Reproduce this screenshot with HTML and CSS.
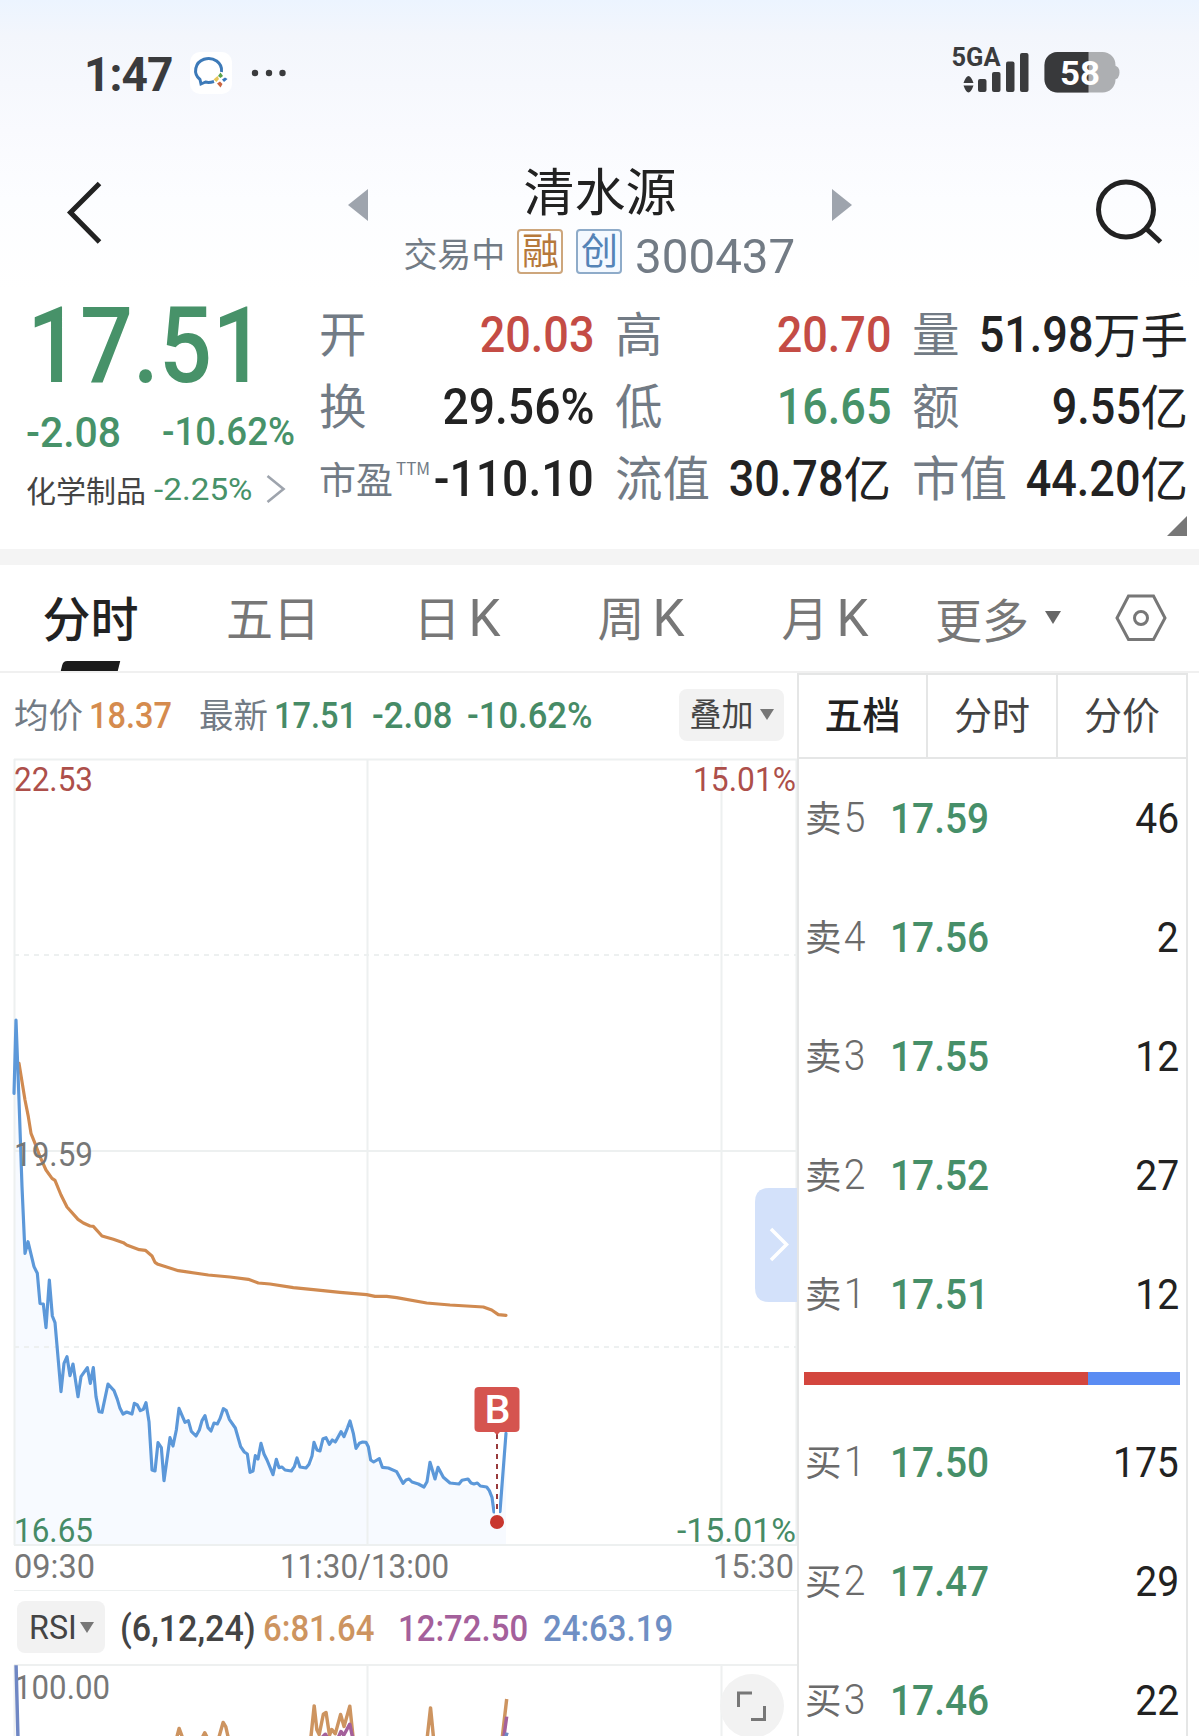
FILE: index.html
```html
<!DOCTYPE html>
<html lang="zh-CN">
<head>
<meta charset="utf-8">
<title>清水源 300437</title>
<link rel="stylesheet" href="styles.css">
</head>
<body>
<header class="top">
  <div class="status">
    <span class="clock">1:47</span>
    <svg class="app" width="42" height="42" viewBox="0 0 42 42"><rect width="42" height="42" rx="10" fill="#fff"/><path d="M31.500 20A13 12 0 1 0 10 27.500L11 32 15.500 30Q19 31 24 29.500" fill="none" stroke="#3d7ab8" stroke-width="3"/><path d="M30.500 20.500L33 24 30.500 26 28 24Z" fill="#5ba24a"/><path d="M37.500 27L34 30 32 27.500 35 25.500Z" fill="#3677bd"/><path d="M30.500 35.500L27 31.500 30 29.500 32.500 32Z" fill="#cb6540"/><path d="M23.500 27.500L27.500 24 29 27 26.500 30Z" fill="#e8c659"/></svg>
    <svg class="dots" width="36" height="8" viewBox="0 0 36 8" fill="#3a3b3d"><circle cx="4" cy="4" r="3.200"/><circle cx="18" cy="4" r="3.200"/><circle cx="31.500" cy="4" r="3.200"/></svg>
    <svg class="signal" width="78" height="58" viewBox="951 40 78 58" fill="#3a3b3d"><text x="951.500" y="66" class="net" textLength="49" lengthAdjust="spacingAndGlyphs">5GA</text><path d="M963.500 83Q966 76 968.500 76T973.500 83ZM963.500 85.500Q966 92.500 968.500 92.500T973.500 85.500Z"/><rect x="978" y="79" width="8.500" height="13" rx="2"/><rect x="992" y="72" width="8.500" height="20" rx="2"/><rect x="1006" y="61.500" width="8.500" height="30.500" rx="2"/><rect x="1020" y="53" width="8.500" height="39" rx="2"/></svg>
    <svg class="battery" width="76" height="42" viewBox="1044 51 76 42"><defs><clipPath id="cell"><rect x="1044.500" y="52" width="71" height="40.500" rx="13"/></clipPath></defs><path d="M1114 65.500Q1119.500 66 1119.500 72.500T1114 79.500Z" fill="#adafb2"/><g clip-path="url(#cell)"><rect x="1044" y="52" width="72" height="41" fill="#adafb2"/><rect x="1044" y="52" width="44.500" height="41" fill="#38393b"/></g><text x="1060" y="84.500" class="pct" textLength="40" lengthAdjust="spacingAndGlyphs">58</text></svg>
  </div>
  <nav class="nav">
    <svg class="back" width="36" height="66" viewBox="66 180 36 66"><path d="M99.500 183.500L70.500 212.500 99.500 242" fill="none" stroke="#222" stroke-width="5"/></svg>
    <svg class="prev" width="20" height="32"><path d="M0 16L20 0V32Z" fill="#9ea4ad"/></svg>
    <div class="name">
      <h1>清水源</h1>
      <div class="sub"><span class="state">交易中</span><span class="tag rong">融</span><span class="tag chuang">创</span><span class="code">300437</span></div>
    </div>
    <svg class="next" width="20" height="32"><path d="M20 16L0 0V32Z" fill="#9ea4ad"/></svg>
    <svg class="search" width="68" height="66" viewBox="1095 178 68 66" fill="none" stroke="#222" stroke-width="5"><circle cx="1126" cy="209.500" r="27.500"/><path d="M1145.500 228L1160.500 242"/></svg>
  </nav>
  <section class="quote">
    <div class="last">
      <div class="price">17.51</div>
      <div class="change"><span class="diff">-2.08</span><span class="rate">-10.62%</span></div>
      <div class="sector"><span>化学制品</span><span class="srate">-2.25%</span><svg width="20" height="28"><path d="M1.500 1L17.500 14 1.500 27" fill="none" stroke="#9ea4ad" stroke-width="2.600"/></svg></div>
    </div>
    <div class="stats">
      <div class="cell"><label>开</label><b class="up">20.03</b></div>
      <div class="cell"><label>高</label><b class="up">20.70</b></div>
      <div class="cell"><label>量</label><b>51.98</b><i>万手</i></div>
      <div class="cell"><label>换</label><b class="pc">29.56%</b></div>
      <div class="cell"><label>低</label><b class="down">16.65</b></div>
      <div class="cell"><label>额</label><b>9.55</b><i>亿</i></div>
      <div class="cell pe"><label>市盈<sup>TTM</sup></label><b class="pc">-110.10</b></div>
      <div class="cell"><label>流值</label><b>30.78</b><i>亿</i></div>
      <div class="cell"><label>市值</label><b>44.20</b><i>亿</i></div>
    </div>
    <svg class="corner" width="20" height="20"><path d="M20 0V20H0Z" fill="#777"/></svg>
  </section>
</header>
<nav class="tabs">
  <span class="on">分时</span><span>五日</span><span>日<em>K</em></span><span>周<em>K</em></span><span>月<em>K</em></span><span class="more">更多<svg width="16" height="13"><path d="M0 0H16L8 13Z" fill="#666"/></svg></span>
  <svg class="hex" width="52" height="48" viewBox="0 0 52 48" fill="none" stroke="#777" stroke-width="3"><path d="M13.500 2H38.500L50 24 38.500 45.500H13.500L2 24Z"/><circle cx="26" cy="24" r="6.500"/></svg>
</nav>
<main>
  <section class="left">
    <div class="info">
      <label>均价</label><b class="avg">18.37</b><label class="l2">最新</label><b class="w1">17.51</b><b class="w2">-2.08</b><b class="w3">-10.62%</b>
      <span class="pill"><em>叠加</em><svg width="14" height="11"><path d="M0 0H14L7 11Z" fill="#777"/></svg></span>
    </div>
    <svg class="plot" width="797" height="833" viewBox="0 758 797 833">
      <g transform="translate(0 1000) scale(.33333)">
        <path fill="#f7faff" d="M42 280L48 60 75 760 84 725 102 800 112 820 120 910 130 912 138 983 148 840 157 948 165 968 183 1175 201 1070 234 1190 280 1103 306 1237 324 1152 369 1242 438 1208 456 1410 474 1328 492 1442 537 1225 588 1308 615 1247 633 1293 670 1226 706 1284 750 1417 783 1330 819 1424 874 1413 936 1393 988 1313 1050 1263 1068 1345 1098 1327 1112 1380 1190 1415 1209 1450 1272 1461 1290 1387 1350 1449 1460 1461 1491 1560 1518 1280V1635H42Z"/>
      </g>
      <g fill="none" stroke="#edf0f0" stroke-width="2"><path d="M14 759.500H797M14 1151H797M14 1545H797M14 1591H797M14.500 759V1545M367.500 759V1545M721.500 759V1545M796.500 759V1545"/><path d="M14 955H797M14 1347H797" stroke-dasharray="5 5"/></g>
      <g transform="translate(0 1000) scale(.33333)" fill="none" stroke-width="9.500" stroke-linejoin="round" stroke-linecap="round">
        <path stroke="#d08a50" d="M57 190L75 300 85 350 93 400 105 430 120 470 138 510 156 535 165 541 183 585 201 621 234 658 250 669 270 678 280 679 306 708 340 718 370 728 380 735 418 749 436 751 456 768 465 787 474 793 535 812 625 825 690 831 745 838 775 849 810 852 880 863 940 869 1020 877 1100 884 1125 889 1160 889 1190 893 1280 909 1350 915 1450 921 1475 930 1495 944 1518 946"/>
        <path stroke="#5c98d9" d="M42 280L48 60 57 300 66 560 75 760 84 725 102 800 112 820 120 910 130 912 138 983 148 840 157 948 165 968 183 1175 192 1090 201 1070 210 1127 219 1092 234 1190 243 1130 262 1103 271 1150 280 1103 288 1190 297 1235 306 1237 324 1152 342 1172 352 1198 360 1225 369 1242 380 1236 396 1242 403 1210 412 1215 421 1232 430 1228 438 1208 447 1265 456 1410 465 1413 474 1328 484 1343 492 1442 510 1313 519 1338 529 1290 537 1225 555 1267 565 1262 574 1294 588 1308 598 1290 606 1262 615 1247 624 1283 633 1293 642 1269 652 1272 660 1256 670 1226 679 1232 688 1258 706 1284 722 1340 733 1356 742 1362 750 1417 759 1413 766 1367 774 1377 783 1330 792 1362 801 1380 819 1424 829 1378 837 1403 846 1401 855 1410 874 1413 883 1400 891 1374 900 1401 918 1404 927 1393 936 1368 942 1327 951 1350 960 1353 969 1316 978 1313 988 1333 997 1320 1006 1326 1023 1295 1032 1310 1042 1285 1050 1263 1060 1300 1068 1345 1078 1330 1088 1326 1098 1327 1105 1340 1112 1380 1121 1386 1138 1376 1147 1402 1165 1404 1190 1415 1209 1450 1218 1440 1227 1437 1236 1446 1255 1452 1272 1461 1281 1445 1290 1387 1305 1437 1314 1402 1330 1432 1350 1449 1377 1452 1386 1441 1404 1437 1413 1449 1422 1452 1432 1449 1441 1458 1460 1461 1468 1472 1476 1492 1482 1536M1500 1535L1518 1300"/>
      </g>
      <path d="M497 1434V1514" stroke="#fff" stroke-width="4"/><path d="M497 1434V1514" stroke="#983a3c" stroke-width="2" stroke-dasharray="5 5"/>
      <path d="M479 1387H515Q519.500 1387 519.500 1391V1428Q519.500 1432 515 1432H500L497 1435 494 1432H479Q474.500 1432 474.500 1428V1391Q474.500 1387 479 1387Z" fill="#d5544f"/>
      <circle cx="497" cy="1522" r="7" fill="#c8372f"/>
      <text x="484.500" y="1422.500" class="mark" textLength="26" lengthAdjust="spacingAndGlyphs">B</text>
      <g class="axis">
        <text x="14" y="791" fill="#ad4f4a" textLength="79" lengthAdjust="spacingAndGlyphs">22.53</text>
        <text x="693" y="791" fill="#ad4f4a" textLength="103" lengthAdjust="spacingAndGlyphs">15.01%</text>
        <text x="14" y="1165.500" fill="#777" textLength="79" lengthAdjust="spacingAndGlyphs">19.59</text>
        <text x="14" y="1541.500" fill="#468b66" textLength="79" lengthAdjust="spacingAndGlyphs">16.65</text>
        <text x="677" y="1541.500" fill="#468b66" textLength="119" lengthAdjust="spacingAndGlyphs">-15.01%</text>
        <text x="14" y="1578" fill="#777" textLength="81" lengthAdjust="spacingAndGlyphs">09:30</text>
        <text x="280" y="1578" fill="#777" textLength="169" lengthAdjust="spacingAndGlyphs">11:30/13:00</text>
        <text x="713" y="1578" fill="#777" textLength="81" lengthAdjust="spacingAndGlyphs">15:30</text>
      </g>
      <path d="M797 1188H769Q755 1188 755 1202V1288Q755 1302 769 1302H797Z" fill="#d3e1fa"/><path d="M771 1229L786.500 1244.500 771 1260" fill="none" stroke="#fff" stroke-width="3.500"/>
    </svg>
    <div class="rsi"><span class="pill"><em>RSI</em><svg width="14" height="11"><path d="M0 0H14L7 11Z" fill="#777"/></svg></span><b class="r0">(6,12,24)</b><b class="r1">6:81.64</b><b class="r2">12:72.50</b><b class="r3">24:63.19</b></div>
    <svg class="plot" width="797" height="73" viewBox="0 1663 797 73">
      <path d="M14 1665H797M14.500 1665V1740M367.500 1665V1740M721.500 1665V1740" fill="none" stroke="#eef0f0" stroke-width="2"/>
      <g class="axis"><text x="14" y="1698.500" fill="#777" textLength="96" lengthAdjust="spacingAndGlyphs">100.00</text></g>
      <g transform="translate(0 1500) scale(.3827 .33333)" fill="none" stroke-width="9" stroke-linejoin="round">
        <path stroke="#cd9460" d="M461 716L468 685 478 716M527 716L535 698 543 716M571 716L583 667 590 680 597 716M812 716L821 617 828 690 834 704 845 642 852 637 861 706 867 688 876 702 890 643 899 680 914 618 923 716M1116 716L1125 623 1133 716M1312 716L1324 597"/>
        <path stroke="#a4609b" d="M838 716L850 702 857 716M884 712L891 694 898 706 914 672 922 716M1316 716L1324 650"/>
        <path stroke="#6f87c4" d="M42 496L47 716M1321 712L1325 698"/>
      </g>
      <circle cx="752" cy="1706" r="32" fill="#f2f2f2"/><path d="M738.500 1707V1693H752M764.500 1706V1719.500H751" fill="none" stroke="#777" stroke-width="3"/>
    </svg>
  </section>
  <aside class="book">
    <div class="modes"><span class="on">五档</span><span>分时</span><span>分价</span></div>
    <div class="row"><label>卖<em>5</em></label><b>17.59</b><span>46</span></div>
    <div class="row"><label>卖<em>4</em></label><b>17.56</b><span>2</span></div>
    <div class="row"><label>卖<em>3</em></label><b>17.55</b><span>12</span></div>
    <div class="row"><label>卖<em>2</em></label><b>17.52</b><span>27</span></div>
    <div class="row"><label>卖<em>1</em></label><b>17.51</b><span>12</span></div>
    <div class="ratio"><i style="width:75.5%"></i></div>
    <div class="row"><label>买<em>1</em></label><b>17.50</b><span>175</span></div>
    <div class="row"><label>买<em>2</em></label><b>17.47</b><span>29</span></div>
    <div class="row"><label>买<em>3</em></label><b>17.46</b><span>22</span></div>
  </aside>
</main>
</body>
</html>
```
FILE: styles.css
```css
*{box-sizing:border-box}
body{margin:0;width:1199px;height:1736px;overflow:hidden;background:#fff;color:#222;font-family:Roboto,"Noto Sans CJK SC",sans-serif}
svg{display:block;flex:none}
b{font-weight:500}
i,em{font-style:normal}
label{font-family:"Noto Sans CJK SC",sans-serif;color:#727b85}
.top{height:549px;background:linear-gradient(#ecf4ff 0,#f3f6fc 36px,#f9fafe 130px,#fcfdff 200px,#fff 290px)}
.status{height:146px;display:flex;align-items:center;padding-left:84px}
.clock{width:106px;font-size:49px;font-weight:700;color:#3a3b3d;letter-spacing:-1px;transform:scaleX(.94);transform-origin:left;padding-top:2px}
.dots{margin-left:19px}
.signal{margin:-8px 0 0 664px}
.net{font:700 25px Roboto,sans-serif}
.battery{margin:-2px 0 0 15px}
.pct{font:700 34px Roboto,sans-serif;fill:#fff}
.nav{height:140px;display:flex;align-items:flex-start;padding-left:66px}
.back{margin-top:34px}
.prev{margin:43px 0 0 246px}
.name{width:464px;display:flex;flex-direction:column;align-items:center}
h1{margin:8px 0 0;font:400 51px/70px "Noto Sans CJK SC",sans-serif}
.sub{height:48px;display:flex;align-items:center;margin-top:3px;padding-left:4px;white-space:nowrap}
.state{margin-top:4px;font:400 34px/48px "Noto Sans CJK SC",sans-serif;color:#727b85}
.tag{width:46px;height:45px;margin-left:12px;border:2px solid;border-radius:4px;text-align:center;font:400 37px/37px "Noto Sans CJK SC",sans-serif}
.rong{color:#b6793b;border-color:#cda67c}
.chuang{margin-left:13px;color:#5584b7;border-color:#8eabc9;background:#f4f9ff}
.code{margin:11px 0 0 13px;font-size:49px;line-height:48px;color:#727b85;transform:scaleX(.97);transform-origin:left}
.next{margin:43px 0 0}
.search{margin:32px 0 0 243px}
.quote{position:relative;height:263px;display:flex;padding:12px 11px 0 26px}
.last{width:294px;color:#479269}
.price{width:254px;height:92px;font-size:105px;line-height:98px;font-weight:500;transform:scaleX(.89);transform-origin:8px 0}
.change{display:flex;align-items:center;height:84px;font-weight:500}
.diff{width:136px;font-size:42px;transform:scaleX(.975);transform-origin:left}
.rate{font-size:39px;transform:scaleX(.94);transform-origin:left}
.sector{display:flex;align-items:center;height:32px;color:#444;font:400 30px/32px "Noto Sans CJK SC",sans-serif;margin-top:-1px}
.srate{width:112px;margin-left:8px;font-family:Roboto,sans-serif;font-size:32px;color:#479269;transform:scaleX(1.04);transform-origin:left}
.stats{flex:1;display:grid;grid-template-columns:274px 275px 275px;column-gap:22px;grid-auto-rows:72px}
.cell{display:flex;align-items:center;white-space:nowrap}
.cell label{margin:-5px 0 0 -1px;font-size:47.500px;line-height:72px}
.cell b{flex:1 0 auto;margin:2px 0 0 -40px;font-size:50px;line-height:72px;text-align:right;transform:scaleX(.9);transform-origin:right}
.cell .pc{transform:scaleX(.925)}
.cell i{margin-top:-3px;font:400 47.500px/72px "Noto Sans CJK SC",sans-serif}
.cell.pe label{margin-top:0;font-size:37px}
.pe sup{display:inline-block;font-size:17px;line-height:20px;vertical-align:19px;margin-left:3px}
.up{color:#c44c45}.down{color:#479269}
.corner{position:absolute;right:12px;bottom:13px}
.tabs{height:124px;border-top:16px solid #f4f4f4;border-bottom:2px solid #f0f0f0;display:flex;align-items:center;color:#777;font:400 47px/102px "Noto Sans CJK SC",sans-serif}
.tabs>span{position:relative;width:184px;text-align:center;height:106px}
.tabs>span:first-child{width:181px}
.tabs>span:nth-child(2){width:184px}
.tabs em{font-family:Roboto,sans-serif;font-size:51px;margin-left:8px}
.tabs .on{color:#222;font-size:48px;font-weight:500}
.tabs .on:after{content:"";position:absolute;left:62px;bottom:0;width:57px;height:10px;background:#1b1b1b;border-radius:4px 0 0 0;transform:skewX(-14deg)}
.tabs .more{display:flex;align-items:center;gap:16px;width:164px;padding-left:18px}
.more svg{margin-top:-2px}
.hex{margin-left:34px}
main{display:flex;height:1063px}
.left{width:797px}
.info{height:85px;display:flex;align-items:center;padding-left:14px;line-height:85px;color:#468b66;font-size:37px;white-space:nowrap}
.info label{width:75px;font-size:34.500px;margin-top:-4px}
.info .l2{width:75px}
.info b{transform:scaleX(.88);transform-origin:left}
.info .avg{width:110px;color:#d58b4e}
.info .w1{width:98px}.info .w2{width:95px}
.info .w2,.info .w3{transform:scaleX(.935)}
.pill{display:flex;align-items:center;justify-content:center;gap:6px;background:#f2f2f2;border-radius:8px;color:#444;height:52px;line-height:52px}
.info .pill{width:105px;margin:-2px 13px 0 auto;font:400 32px/46px "Noto Sans CJK SC",sans-serif}
.info .pill em{height:52px}
.rsi{height:72px;display:flex;align-items:center;padding-left:17px;font-size:37px;white-space:nowrap}
.rsi .pill{width:88px;font-size:34px}
.rsi em{width:45px;transform:scaleX(.95);transform-origin:left}
.rsi b{margin-top:2px;transform:scaleX(.89);transform-origin:left}
.rsi .r0{width:143px;margin-left:15px;color:#444;transform:scaleX(.92)}
.r1{width:135px;color:#cd9460}
.r2{width:145px;color:#a4609b}
.r3{color:#6f8fc4}
.axis text{font:400 33px Roboto,sans-serif}
.mark{font:500 38px Roboto,sans-serif;fill:#fff}
.book{width:391px;border:2px solid #e5e6e6;border-bottom:0}
.modes{display:flex;height:84px;border-bottom:2px solid #e5e6e6;color:#444;font:400 38px/76px "Noto Sans CJK SC",sans-serif}
.modes span{flex:1;text-align:center}
.modes .on{flex:none;width:127px}
.modes span+span{border-left:2px solid #e5e6e6}
.modes .on{color:#222;font-weight:500}
.row{height:119px;display:flex;align-items:center;padding:0 7px 0 6px;font-size:42px;line-height:119px}
.row label{width:85px;margin-top:-4px;font-size:36.500px;color:#6b6b6b}
.row em{display:inline-block;font-family:Roboto,sans-serif;font-size:42px;font-weight:350;margin-left:1px;transform:scaleX(.93)}
.row b{color:#468f69;flex:1;transform:scaleX(.925);transform-origin:left}
.row span{transform:scaleX(.93);transform-origin:right;font-weight:400}
.ratio{height:13px;margin:18px 6px 18px 5px;background:#5a8cf3}
.ratio i{display:block;height:13px;background:#d3463e}
```
